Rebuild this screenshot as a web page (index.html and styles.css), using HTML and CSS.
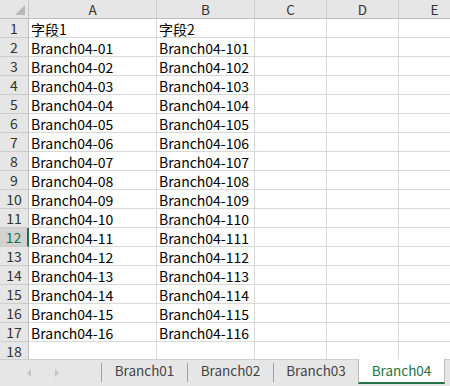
FILE: index.html
```html
<!DOCTYPE html>
<html>
<head>
<meta charset="utf-8">
<link rel="stylesheet" href="styles.css">
</head>
<body>
<div class="app">
  <div class="sheet">
    <div class="grid">
      <div class="corner"><span class="tri"></span></div>
      <div class="ch">A</div><div class="ch">B</div><div class="ch">C</div><div class="ch">D</div><div class="ch">E</div>

      <div class="rh">1</div><div class="c">字段1</div><div class="c">字段2</div><div class="c"></div><div class="c"></div><div class="c"></div>
      <div class="rh">2</div><div class="c">Branch04-01</div><div class="c">Branch04-101</div><div class="c"></div><div class="c"></div><div class="c"></div>
      <div class="rh">3</div><div class="c">Branch04-02</div><div class="c">Branch04-102</div><div class="c"></div><div class="c"></div><div class="c"></div>
      <div class="rh">4</div><div class="c">Branch04-03</div><div class="c">Branch04-103</div><div class="c"></div><div class="c"></div><div class="c"></div>
      <div class="rh">5</div><div class="c">Branch04-04</div><div class="c">Branch04-104</div><div class="c"></div><div class="c"></div><div class="c"></div>
      <div class="rh">6</div><div class="c">Branch04-05</div><div class="c">Branch04-105</div><div class="c"></div><div class="c"></div><div class="c"></div>
      <div class="rh">7</div><div class="c">Branch04-06</div><div class="c">Branch04-106</div><div class="c"></div><div class="c"></div><div class="c"></div>
      <div class="rh">8</div><div class="c">Branch04-07</div><div class="c">Branch04-107</div><div class="c"></div><div class="c"></div><div class="c"></div>
      <div class="rh">9</div><div class="c">Branch04-08</div><div class="c">Branch04-108</div><div class="c"></div><div class="c"></div><div class="c"></div>
      <div class="rh">10</div><div class="c">Branch04-09</div><div class="c">Branch04-109</div><div class="c"></div><div class="c"></div><div class="c"></div>
      <div class="rh">11</div><div class="c">Branch04-10</div><div class="c">Branch04-110</div><div class="c"></div><div class="c"></div><div class="c"></div>
      <div class="rh sel">12</div><div class="c">Branch04-11</div><div class="c">Branch04-111</div><div class="c"></div><div class="c"></div><div class="c"></div>
      <div class="rh">13</div><div class="c">Branch04-12</div><div class="c">Branch04-112</div><div class="c"></div><div class="c"></div><div class="c"></div>
      <div class="rh">14</div><div class="c">Branch04-13</div><div class="c">Branch04-113</div><div class="c"></div><div class="c"></div><div class="c"></div>
      <div class="rh">15</div><div class="c">Branch04-14</div><div class="c">Branch04-114</div><div class="c"></div><div class="c"></div><div class="c"></div>
      <div class="rh">16</div><div class="c">Branch04-15</div><div class="c">Branch04-115</div><div class="c"></div><div class="c"></div><div class="c"></div>
      <div class="rh">17</div><div class="c">Branch04-16</div><div class="c">Branch04-116</div><div class="c"></div><div class="c"></div><div class="c"></div>
      <div class="rh">18</div><div class="c"></div><div class="c"></div><div class="c"></div><div class="c"></div><div class="c"></div>
    </div>
  </div>
  <div class="tabbar">
    <div class="nav">
      <span class="arr left"></span>
      <span class="arr right"></span>
    </div>
    <div class="tabs">
      <div class="tab">Branch01</div>
      <div class="tab">Branch02</div>
      <div class="tab t3">Branch03</div>
      <div class="tab active">Branch04</div>
    </div>
  </div>
</div>
</body>
</html>
```

FILE: styles.css
```css
* {
  box-sizing: border-box;
  margin: 0;
  padding: 0;
}

html, body {
  width: 450px;
  height: 386px;
  overflow: hidden;
  background: #ffffff;
}

body {
  font-family: "Noto Sans CJK SC", "Liberation Sans", sans-serif;
  color: #000;
}

.app {
  width: 450px;
  height: 386px;
  display: flex;
  flex-direction: column;
}

.sheet {
  height: 359px;
  overflow: hidden;
  flex: none;
}

.grid {
  display: grid;
  grid-template-columns: 29px 128px 98px 72px 72px 72px;
  grid-auto-rows: 19px;
  width: 471px;
}

.grid > div {
  border-right: 1px solid #d9d9d9;
  border-bottom: 1px solid #d9d9d9;
  white-space: nowrap;
}

.corner {
  background: #e6e6e6;
  position: relative;
  border-right-color: #c8c8c8 !important;
  border-bottom-color: #bdbdbd !important;
}

.tri {
  position: absolute;
  right: 3px;
  bottom: 3px;
  width: 0;
  height: 0;
  border-left: 10px solid transparent;
  border-bottom: 10px solid #b9b9b9;
}

.ch {
  background: #e6e6e6;
  text-align: center;
  font-size: 13.5px;
  line-height: 18px;
  color: #333;
  border-right-color: #cdcdcd !important;
  border-bottom-color: #bdbdbd !important;
}

.rh {
  background: #e6e6e6;
  text-align: center;
  font-size: 14px;
  line-height: 19px;
  color: #333;
  border-right-color: #bdbdbd !important;
  border-bottom-color: #cdcdcd !important;
}

.rh.sel {
  background: #d2d2d2;
  color: #217346;
  border-right: 2px solid #217346 !important;
}

.c {
  font-size: 14px;
  line-height: 18px;
  padding-left: 2px;
  padding-top: 1px;
}

.tabbar {
  flex: 1;
  display: flex;
  background: #e6e6e6;
  border-top: 1px solid #cfcfcf;
}

.nav {
  width: 101px;
  flex: none;
  display: flex;
  align-items: center;
  padding-left: 27px;
  gap: 24px;
  padding-bottom: 1px;
}

.arr {
  width: 0;
  height: 0;
  border-top: 4px solid transparent;
  border-bottom: 4px solid transparent;
}

.arr.left {
  border-right: 4px solid #c4c4c4;
}

.arr.right {
  border-left: 4px solid #c4c4c4;
}

.tabs {
  display: flex;
  align-items: flex-start;
}

.tab {
  width: 86px;
  height: 19px;
  margin-top: 3px;
  border-left: 1px solid #a0a0a0;
  text-align: center;
  font-size: 13.5px;
  line-height: 15px;
  color: #444;
}

.tab.t3 {
  width: 85px;
}

.tab.active {
  width: 87px;
  height: 25px;
  margin-top: -1px;
  padding-top: 4px;
  background: #ffffff;
  color: #217346;
  border-left: 1px solid #bcbcbc;
  border-right: 1px solid #bcbcbc;
  border-bottom: 2px solid #217346;
}
```
